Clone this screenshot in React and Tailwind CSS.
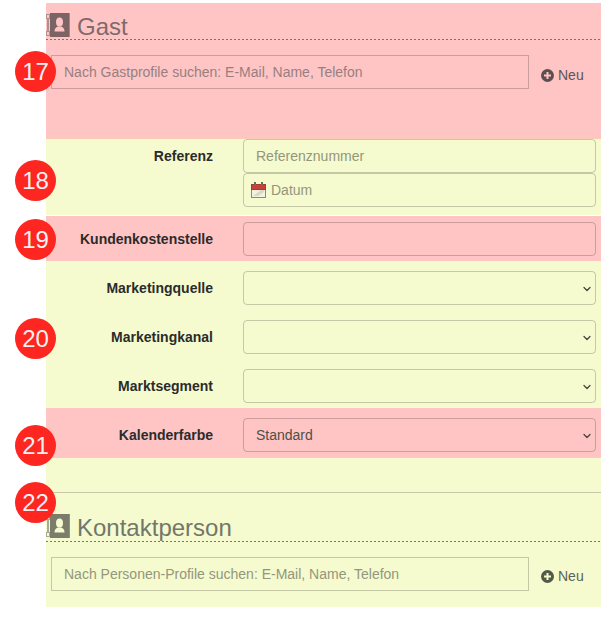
import { ChevronDown } from "lucide-react";

const fieldBase = "h-[34px] w-full rounded border border-black/20 bg-transparent px-3 text-sm outline-none";

// Nummern-Marker links am Rand
const Badge = ({ n, top }) => (
  <div
    className={`absolute left-[15px] z-10 flex h-[41px] w-[41px] items-center justify-center rounded-full bg-[#fe2620] text-[24px] text-[#f5f0f0] ${top}`}
  >
    {n}
  </div>
);

const ContactIcon = ({ fill, bg }) => (
  <svg width="24" height="24" viewBox="0 0 24 24" className="shrink-0">
    <rect x="4" y="0" width="19" height="24" fill={fill} />
    <rect x="23" y="0" width="1" height="24" fill="#7f93b5" />
    <g fill="none" stroke="#5a5a58" strokeWidth="1" strokeDasharray="1 1">
      <rect x="0.5" y="1.5" width="3" height="4" />
      <rect x="1.5" y="6.5" width="1" height="11" />
      <rect x="0.5" y="18.5" width="3" height="4" />
    </g>
    <ellipse cx="13.5" cy="9" rx="3.5" ry="4.5" fill={bg} />
    <path d="M8.5 18.5c0-3 1.5-5 5-5s5 2 5 5z" fill={bg} />
  </svg>
);

const PlusIcon = ({ fill, bg }) => (
  <svg width="13" height="13" viewBox="0 0 13 13" className="shrink-0">
    <circle cx="6.5" cy="6.5" r="6.5" fill={fill} />
    <path d="M6.5 3v7M3 6.5h7" stroke={bg} strokeWidth="2" />
  </svg>
);

const CalendarIcon = () => (
  <svg width="15" height="16" viewBox="0 0 15 16" className="shrink-0">
    <rect x="0.5" y="2.5" width="14" height="13" fill="#f2f2e4" stroke="#8b8b78" />
    <rect x="0.5" y="2.5" width="14" height="5" fill="#c9403a" stroke="#a83a34" />
    <rect x="3" y="0" width="2" height="4" fill="#6d6d5c" />
    <rect x="10" y="0" width="2" height="4" fill="#6d6d5c" />
    <path d="M2 14l8-6h3v2l-6 4z" fill="#d5dcc0" />
  </svg>
);

const Heading = ({ title, fill, bg, textColor, height }) => (
  <div className={height}>
    <div className="flex h-full items-start gap-[7px]">
      <ContactIcon fill={fill} bg={bg} />
      <span className={`text-2xl leading-[28px] ${textColor}`}>{title}</span>
    </div>
    <div className="h-px bg-[repeating-linear-gradient(to_right,#77776f_0_2px,transparent_2px_4px)]" />
  </div>
);

const ProfileSearch = ({ placeholder, fill, bg, textColor, placeholderColor, neuOffset }) => (
  <div className="mt-[16px] flex items-start pl-[5px]">
    <input
      placeholder={placeholder}
      className={`h-[34px] w-[478px] border border-black/20 bg-transparent px-3 text-sm outline-none ${placeholderColor}`}
    />
    <div className={`ml-3 flex items-center gap-1 text-sm ${neuOffset} ${textColor}`}>
      <PlusIcon fill={fill} bg={bg} />
      Neu
    </div>
  </div>
);

const Row = ({ label, className = "", children }) => (
  <div className={`flex ${className}`}>
    <label className="w-[167px] shrink-0 pt-[9px] text-right text-sm font-bold leading-4 text-[#2b2b2b]">{label}</label>
    <div className="ml-[30px] w-[353px]">{children}</div>
  </div>
);

const SelectField = ({ value }) => (
  <div className="relative">
    <select defaultValue={value} className={`${fieldBase} appearance-none text-[#4f4f46]`}>
      <option value="">{""}</option>
      <option value="Standard">Standard</option>
    </select>
    <ChevronDown size={12} strokeWidth={2.5} className="pointer-events-none absolute right-[3px] top-[12px] text-[#44443c]" />
  </div>
);

const App = () => {
  return (
    <div className="relative h-[619px] w-[601px] overflow-hidden bg-white pt-[3px] font-['Liberation_Sans',Arial,sans-serif]">
      <Badge n="17" top="top-[51px]" />
      <Badge n="18" top="top-[160px]" />
      <Badge n="19" top="top-[219px]" />
      <Badge n="20" top="top-[318px]" />
      <Badge n="21" top="top-[425px]" />
      <Badge n="22" top="top-[482px]" />

      <div className="ml-[46px] w-[555px]">
        <section className="h-[136px] border-b border-[#fbcdb0] bg-[#ffc5c5] pt-[10px]">
          <Heading title="Gast" fill="#7c6364" bg="#ffc5c5" textColor="text-[#7f6a6b]" height="h-[26px]" />
          <ProfileSearch
            placeholder="Nach Gastprofile suchen: E-Mail, Name, Telefon"
            fill="#5e4f4f"
            bg="#ffc5c5"
            textColor="text-[#5e5454]"
            placeholderColor="placeholder:text-[#977f7f]"
            neuOffset="pt-[10px]"
          />
        </section>

        <section className="h-[77px] border-b border-white bg-[#f5fbcf]">
          <Row label="Referenz">
            <input placeholder="Referenznummer" className={`${fieldBase} rounded placeholder:text-[#94967c]`} />
            <div className={`${fieldBase} flex items-center gap-[5px] pl-[7px] text-[#94967c]`}>
              <CalendarIcon />
              Datum
            </div>
          </Row>
        </section>

        <section className="h-[45px] bg-[#ffc5c5] pt-[6px]">
          <Row label="Kundenkostenstelle">
            <input className={fieldBase} />
          </Row>
        </section>

        <section className="flex h-[147px] flex-col gap-[15px] bg-[#f5fbcf] pt-[10px]">
          <Row label="Marketingquelle"><SelectField value="" /></Row>
          <Row label="Marketingkanal"><SelectField value="" /></Row>
          <Row label="Marktsegment"><SelectField value="" /></Row>
        </section>

        <section className="h-[50px] border-b border-[#fbcdb0] bg-[#ffc5c5] pt-[10px]">
          <Row label="Kalenderfarbe"><SelectField value="Standard" /></Row>
        </section>

        <section className="h-[149px] bg-[#f5fbcf] pt-[34px]">
          <div className="mb-[21px] border-t border-[#c6c9a8]" />
          <Heading title="Kontaktperson" fill="#7a7d69" bg="#f5fbcf" textColor="text-[#73766a]" height="h-[27px]" />
          <ProfileSearch
            placeholder="Nach Personen-Profile suchen: E-Mail, Name, Telefon"
            fill="#545a48"
            bg="#f5fbcf"
            textColor="text-[#5d6352]"
            placeholderColor="placeholder:text-[#94967c]"
            neuOffset="pt-[9px]"
          />
        </section>
      </div>
    </div>
  );
};

export default App;
